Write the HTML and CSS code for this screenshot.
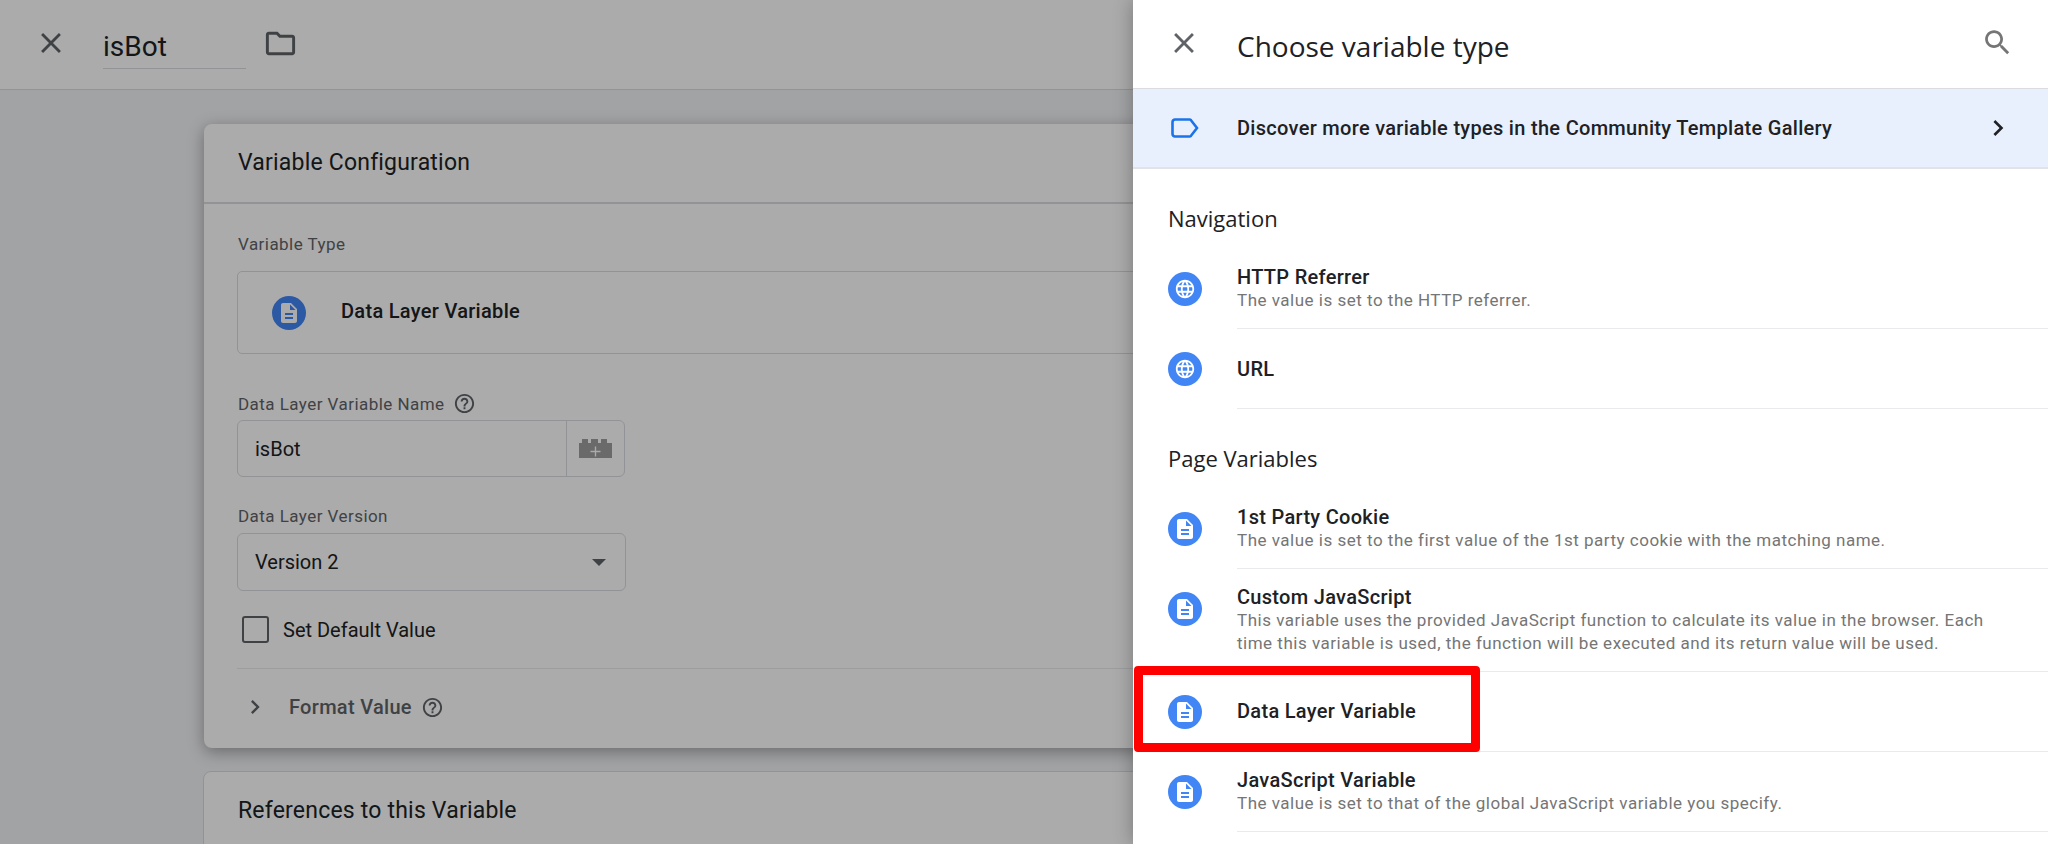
FILE: index.html
```html
<!DOCTYPE html>
<html>

<head>
    <title>Choose variable type</title>
    <link rel="stylesheet" href="styles.css">
</head>

<body>
    <div class="editor">
        <div class="editor-bar">
            <svg class="bar-close" viewBox="0 0 24 24"><path d="M19 6.41L17.59 5 12 10.59 6.41 5 5 6.41 10.59 12 5 17.59 6.41 19 12 13.41 17.59 19 19 17.59 13.41 12z"/></svg>
            <div class="name-field">isBot</div>
            <svg class="bar-folder" viewBox="0 0 24 24"><path d="M20 6h-8l-2-2H4c-1.1 0-2 .9-2 2v12c0 1.1.9 2 2 2h16c1.1 0 2-.9 2-2V8c0-1.1-.9-2-2-2zm0 12H4V6h5.17l2 2H20v10z"/></svg>
        </div>

        <div class="card card-raised">
            <h2 class="card-title">Variable Configuration</h2>
            <div class="card-body">
                <div class="field-label first-label">Variable Type</div>
                <div class="type-box">
                    <span class="type-icon">
                        <svg viewBox="0 0 24 24"><path d="M14 2H6c-1.1 0-1.99.9-1.99 2L4 20c0 1.1.89 2 1.99 2H18c1.1 0 2-.9 2-2V8l-6-6zm2 16H8v-2h8v2zm0-4H8v-2h8v2zm-3-5V3.5L18.5 9H13z"/></svg>
                    </span>
                    <span class="type-name">Data Layer Variable</span>
                </div>

                <div class="field-label name-label">
                    Data Layer Variable Name
                    <svg class="help" viewBox="0 0 24 24"><path d="M11 18h2v-2h-2v2zm1-16C6.48 2 2 6.48 2 12s4.48 10 10 10 10-4.48 10-10S17.52 2 12 2zm0 18c-4.41 0-8-3.59-8-8s3.59-8 8-8 8 3.59 8 8-3.59 8-8 8zm0-14c-2.21 0-4 1.79-4 4h2c0-1.1.9-2 2-2s2 .9 2 2c0 2-3 1.75-3 5h2c0-2.25 3-2.5 3-5 0-2.21-1.79-4-4-4z"/></svg>
                </div>
                <div class="input-group">
                    <span class="input-value">isBot</span>
                    <span class="input-addon">
                        <svg viewBox="0 0 33 19">
                            <path class="brick" d="M0 4h3V0h6v4h3V0h7v4h3V0h6v4h5v15H0z"/>
                            <path class="brick-plus" d="M15.8 7.5h1.4v4.3h4.3v1.4h-4.3v4.3h-1.4v-4.3h-4.3v-1.4h4.3z"/>
                        </svg>
                    </span>
                </div>

                <div class="field-label version-label">Data Layer Version</div>
                <div class="select-box">
                    <span>Version 2</span>
                    <span class="caret"></span>
                </div>

                <div class="checkbox-row">
                    <span class="checkbox"></span>
                    <span>Set Default Value</span>
                </div>

                <div class="format-row">
                    <svg class="format-chevron" viewBox="0 0 24 24"><path d="M10 6L8.59 7.41 13.17 12l-4.58 4.59L10 18l6-6z"/></svg>
                    <span class="format-text">Format Value</span>
                    <svg class="help" viewBox="0 0 24 24"><path d="M11 18h2v-2h-2v2zm1-16C6.48 2 2 6.48 2 12s4.48 10 10 10 10-4.48 10-10S17.52 2 12 2zm0 18c-4.41 0-8-3.59-8-8s3.59-8 8-8 8 3.59 8 8-3.59 8-8 8zm0-14c-2.21 0-4 1.79-4 4h2c0-1.1.9-2 2-2s2 .9 2 2c0 2-3 1.75-3 5h2c0-2.25 3-2.5 3-5 0-2.21-1.79-4-4-4z"/></svg>
                </div>
            </div>
        </div>

        <div class="card card-flat">
            <h2 class="card-title">References to this Variable</h2>
        </div>
    </div>

    <div class="scrim"></div>

    <div class="panel">
        <div class="panel-head">
            <svg class="panel-close" viewBox="0 0 24 24"><path d="M19 6.41L17.59 5 12 10.59 6.41 5 5 6.41 10.59 12 5 17.59 6.41 19 12 13.41 17.59 19 19 17.59 13.41 12z"/></svg>
            <h1 class="panel-title">Choose variable type</h1>
            <svg class="panel-search" viewBox="0 0 24 24"><path d="M15.5 14h-.79l-.28-.27C15.41 12.59 16 11.11 16 9.5 16 5.91 13.09 3 9.5 3S3 5.91 3 9.5 5.91 16 9.5 16c1.61 0 3.09-.59 4.23-1.57l.27.28v.79l5 4.99L20.49 19l-4.99-5zm-6 0C7.01 14 5 11.99 5 9.5S7.01 5 9.5 5 14 7.01 14 9.5 11.99 14 9.5 14z"/></svg>
        </div>

        <div class="banner">
            <span class="banner-icon">
                <svg viewBox="0 0 28 20"><path d="M4 1.5h14.5a2 2 0 0 1 1.5.7L26 10l-6 7.8a2 2 0 0 1-1.5.7H4A2.5 2.5 0 0 1 1.5 16V4A2.5 2.5 0 0 1 4 1.5z"/></svg>
            </span>
            <span class="banner-text">Discover more variable types in the Community Template Gallery</span>
            <svg class="banner-chevron" viewBox="0 0 24 24"><path d="M10 6L8.59 7.41 13.17 12l-4.58 4.59L10 18l6-6z"/></svg>
        </div>

        <h3 class="group-title">Navigation</h3>
        <div class="type-row">
            <span class="row-icon">
                <svg class="globe" viewBox="0 0 24 24"><path d="M11.99 2C6.47 2 2 6.48 2 12s4.47 10 9.99 10C17.52 22 22 17.52 22 12S17.52 2 11.99 2zm6.93 6h-2.95c-.32-1.25-.78-2.45-1.38-3.56 1.84.63 3.37 1.91 4.33 3.56zM12 4.04c.83 1.2 1.48 2.53 1.91 3.96h-3.82c.43-1.43 1.08-2.76 1.91-3.96zM4.26 14C4.1 13.36 4 12.69 4 12s.1-1.36.26-2h3.38c-.08.66-.14 1.32-.14 2 0 .68.06 1.34.14 2H4.26zm.82 2h2.95c.32 1.25.78 2.45 1.38 3.56-1.84-.63-3.37-1.9-4.33-3.56zm2.95-8H5.08c.96-1.66 2.49-2.93 4.33-3.56C8.81 5.55 8.35 6.75 8.03 8zM12 19.96c-.83-1.2-1.48-2.53-1.91-3.96h3.82c-.43 1.43-1.08 2.76-1.91 3.96zM14.34 14H9.66c-.09-.66-.16-1.32-.16-2 0-.68.07-1.35.16-2h4.68c.09.65.16 1.32.16 2 0 .68-.07 1.34-.16 2zm.25 5.56c.6-1.11 1.06-2.31 1.38-3.56h2.95c-.97 1.65-2.5 2.93-4.33 3.56zM16.36 14c.08-.66.14-1.32.14-2 0-.68-.06-1.34-.14-2h3.38c.16.64.26 1.31.26 2s-.1 1.36-.26 2h-3.38z"/></svg>
            </span>
            <div class="row-body">
                <div class="row-name">HTTP Referrer</div>
                <div class="row-desc">The value is set to the HTTP referrer.</div>
            </div>
        </div>
        <div class="type-row">
            <span class="row-icon">
                <svg class="globe" viewBox="0 0 24 24"><path d="M11.99 2C6.47 2 2 6.48 2 12s4.47 10 9.99 10C17.52 22 22 17.52 22 12S17.52 2 11.99 2zm6.93 6h-2.95c-.32-1.25-.78-2.45-1.38-3.56 1.84.63 3.37 1.91 4.33 3.56zM12 4.04c.83 1.2 1.48 2.53 1.91 3.96h-3.82c.43-1.43 1.08-2.76 1.91-3.96zM4.26 14C4.1 13.36 4 12.69 4 12s.1-1.36.26-2h3.38c-.08.66-.14 1.32-.14 2 0 .68.06 1.34.14 2H4.26zm.82 2h2.95c.32 1.25.78 2.45 1.38 3.56-1.84-.63-3.37-1.9-4.33-3.56zm2.95-8H5.08c.96-1.66 2.49-2.93 4.33-3.56C8.81 5.55 8.35 6.75 8.03 8zM12 19.96c-.83-1.2-1.48-2.53-1.91-3.96h3.82c-.43 1.43-1.08 2.76-1.91 3.96zM14.34 14H9.66c-.09-.66-.16-1.32-.16-2 0-.68.07-1.35.16-2h4.68c.09.65.16 1.32.16 2 0 .68-.07 1.34-.16 2zm.25 5.56c.6-1.11 1.06-2.31 1.38-3.56h2.95c-.97 1.65-2.5 2.93-4.33 3.56zM16.36 14c.08-.66.14-1.32.14-2 0-.68-.06-1.34-.14-2h3.38c.16.64.26 1.31.26 2s-.1 1.36-.26 2h-3.38z"/></svg>
            </span>
            <div class="row-body">
                <div class="row-name">URL</div>
            </div>
        </div>

        <h3 class="group-title">Page Variables</h3>
        <div class="type-row">
            <span class="row-icon">
                <svg viewBox="0 0 24 24"><path d="M14 2H6c-1.1 0-1.99.9-1.99 2L4 20c0 1.1.89 2 1.99 2H18c1.1 0 2-.9 2-2V8l-6-6zm2 16H8v-2h8v2zm0-4H8v-2h8v2zm-3-5V3.5L18.5 9H13z"/></svg>
            </span>
            <div class="row-body">
                <div class="row-name">1st Party Cookie</div>
                <div class="row-desc">The value is set to the first value of the 1st party cookie with the matching name.</div>
            </div>
        </div>
        <div class="type-row">
            <span class="row-icon">
                <svg viewBox="0 0 24 24"><path d="M14 2H6c-1.1 0-1.99.9-1.99 2L4 20c0 1.1.89 2 1.99 2H18c1.1 0 2-.9 2-2V8l-6-6zm2 16H8v-2h8v2zm0-4H8v-2h8v2zm-3-5V3.5L18.5 9H13z"/></svg>
            </span>
            <div class="row-body">
                <div class="row-name">Custom JavaScript</div>
                <div class="row-desc">This variable uses the provided JavaScript function to calculate its value in the browser. Each time this variable is used, the function will be executed and its return value will be used.</div>
            </div>
        </div>
        <div class="type-row">
            <span class="row-icon">
                <svg viewBox="0 0 24 24"><path d="M14 2H6c-1.1 0-1.99.9-1.99 2L4 20c0 1.1.89 2 1.99 2H18c1.1 0 2-.9 2-2V8l-6-6zm2 16H8v-2h8v2zm0-4H8v-2h8v2zm-3-5V3.5L18.5 9H13z"/></svg>
            </span>
            <div class="row-body">
                <div class="row-name">Data Layer Variable</div>
            </div>
        </div>
        <div class="type-row">
            <span class="row-icon">
                <svg viewBox="0 0 24 24"><path d="M14 2H6c-1.1 0-1.99.9-1.99 2L4 20c0 1.1.89 2 1.99 2H18c1.1 0 2-.9 2-2V8l-6-6zm2 16H8v-2h8v2zm0-4H8v-2h8v2zm-3-5V3.5L18.5 9H13z"/></svg>
            </span>
            <div class="row-body">
                <div class="row-name">JavaScript Variable</div>
                <div class="row-desc">The value is set to that of the global JavaScript variable you specify.</div>
            </div>
        </div>

        <div class="highlight"></div>
    </div>
</body>

</html>
```

FILE: styles.css
```css
* {
    box-sizing: border-box;
}

html,
body {
    margin: 0;
    height: 844px;
    overflow: hidden;
}

body {
    position: relative;
    font-family: Roboto, Arial, sans-serif;
    color: #202124;
    background-color: #f2f3f6;
}

h1,
h2,
h3 {
    margin: 0;
    font-weight: 400;
}

/* editor behind the panel */

.editor-bar {
    display: flex;
    align-items: flex-start;
    height: 90px;
    background-color: #fff;
    border-bottom: 1px solid #dadce0;
}

.bar-close {
    width: 34px;
    height: 34px;
    margin: 26px 0 0 34px;
    fill: #5f6368;
}

.name-field {
    width: 143px;
    height: 69px;
    margin-left: 35px;
    padding-top: 29px;
    font-size: 28px;
    line-height: 36px;
    border-bottom: 1px solid #dadce0;
}

.bar-folder {
    width: 35px;
    height: 35px;
    margin: 26px 0 0 17px;
    fill: #5f6368;
}

.card {
    width: 1640px;
    margin-left: 204px;
    background-color: #fff;
    border-radius: 8px 8px 0 0;
}

.card-raised {
    height: 624px;
    margin-top: 34px;
    border-radius: 8px;
    box-shadow: 0 4px 16px rgba(0, 0, 0, 0.35);
}

.card-flat {
    height: 120px;
    margin-top: 23px;
    margin-left: 203px;
    border: 1px solid #dadce0;
}

.card-title {
    height: 80px;
    padding: 25px 34px 0;
    font-size: 23px;
    line-height: 28px;
    letter-spacing: 0.2px;
    border-bottom: 2px solid #dadce0;
}

.card-flat .card-title {
    border-bottom: none;
}

.card-body {
    padding: 0 33px;
}

.field-label {
    display: flex;
    align-items: center;
    padding-left: 1px;
    font-size: 17px;
    line-height: 22px;
    letter-spacing: 0.45px;
    color: #5f6368;
}

.first-label {
    padding-top: 29px;
    height: 51px;
}

.help {
    width: 23px;
    height: 23px;
    margin-left: 9px;
    fill: #5f6368;
}

.type-box {
    display: flex;
    align-items: center;
    height: 83px;
    margin-top: 16px;
    border: 1.5px solid #dadce0;
    border-radius: 5px;
}

.type-icon {
    display: flex;
    align-items: center;
    justify-content: center;
    width: 34px;
    height: 34px;
    margin-left: 34px;
    border-radius: 50%;
    background-color: #4285f4;
}

.type-icon svg {
    width: 24px;
    height: 24px;
    fill: #fff;
}

.type-name {
    margin: -4px 0 0 35px;
    font-size: 20px;
    font-weight: 500;
    letter-spacing: 0.3px;
}

.name-label {
    margin-top: 38px;
}

.input-group {
    display: flex;
    align-items: center;
    justify-content: space-between;
    width: 388px;
    height: 57px;
    margin-top: 5px;
    padding-left: 17px;
    font-size: 20px;
    border: 1.5px solid #dadce0;
    border-radius: 6px;
}

.input-addon {
    display: flex;
    align-items: center;
    justify-content: center;
    width: 58px;
    height: 100%;
    border-left: 1.5px solid #dadce0;
}

.input-addon svg {
    width: 33px;
    height: 19px;
}

.brick {
    fill: #9e9e9e;
}

.brick-plus {
    fill: #fff;
}

.version-label {
    margin-top: 28px;
}

.select-box {
    display: flex;
    align-items: center;
    justify-content: space-between;
    width: 389px;
    height: 58px;
    margin-top: 6px;
    padding: 0 19px 0 17px;
    font-size: 20px;
    border: 1.5px solid #dadce0;
    border-radius: 6px;
}

.caret {
    width: 0;
    height: 0;
    border-left: 7px solid transparent;
    border-right: 7px solid transparent;
    border-top: 7px solid #5f6368;
}

.checkbox-row {
    display: flex;
    align-items: center;
    height: 78px;
    font-size: 20px;
    border-bottom: 1.5px solid #e8eaed;
}

.checkbox {
    width: 27px;
    height: 27px;
    margin: 0 14px 0 5px;
    border: 2.5px solid #5f6368;
    border-radius: 3px;
}

.format-row {
    display: flex;
    align-items: center;
    height: 76px;
}

.format-chevron {
    width: 28px;
    height: 28px;
    margin-left: 4px;
    fill: #5f6368;
}

.format-text {
    margin-left: 20px;
    font-size: 20px;
    font-weight: 500;
    letter-spacing: 0.3px;
    color: #5f6368;
}

/* dim layer between editor and panel */

.scrim {
    position: absolute;
    top: 0;
    left: 0;
    width: 100%;
    height: 100%;
    background-color: rgba(0, 0, 0, 0.33);
}

/* side panel */

.panel {
    position: absolute;
    top: 0;
    right: 0;
    bottom: 0;
    width: 915px;
    overflow: hidden;
    background-color: #fff;
    box-shadow: 0 0 18px rgba(0, 0, 0, 0.3);
}

.panel-head {
    display: flex;
    align-items: center;
    height: 89px;
    border-bottom: 1px solid #dadce0;
}

.panel-close {
    width: 34px;
    height: 34px;
    margin: -2px 0 0 34px;
    fill: #5f6368;
}

.panel-title {
    flex: 1;
    margin: 3px 0 0 36px;
    font-family: "Open Sans", Roboto, sans-serif;
    font-size: 28px;
}

.panel-search {
    width: 33px;
    height: 33px;
    margin: -4px 34px 0 0;
    fill: #757575;
}

.banner {
    display: flex;
    align-items: center;
    height: 80px;
    background-color: #e8f0fe;
    border-bottom: 2px solid #e0e3e8;
}

.banner-icon {
    display: flex;
    width: 28px;
    margin-left: 38px;
}

.banner-icon svg {
    width: 28px;
    height: 20px;
    fill: none;
    stroke: #1a73e8;
    stroke-width: 2.6;
}

.banner-text {
    flex: 1;
    margin-left: 38px;
    font-size: 20px;
    font-weight: 500;
    letter-spacing: 0.3px;
}

.banner-chevron {
    width: 32px;
    height: 32px;
    margin-right: 34px;
    fill: #202124;
}

.group-title {
    height: 80px;
    padding: 35px 0 0 35px;
    font-family: "Open Sans", Roboto, sans-serif;
    font-size: 22px;
    line-height: 28px;
}

.type-row {
    display: flex;
}

.row-icon {
    display: flex;
    align-items: center;
    justify-content: center;
    flex-shrink: 0;
    width: 34px;
    height: 34px;
    margin: 23px 35px 0 35px;
    border-radius: 50%;
    background-color: #4285f4;
}

.row-icon svg {
    width: 24px;
    height: 24px;
    fill: #fff;
}

.row-icon svg.globe {
    width: 22px;
    height: 22px;
}

.row-body {
    display: flex;
    flex: 1;
    flex-direction: column;
    justify-content: center;
    min-height: 80px;
    padding: 16px 40px 15.5px 0;
    border-bottom: 1.5px solid #e8eaed;
}

.row-name {
    font-size: 20px;
    line-height: 24px;
    font-weight: 500;
    letter-spacing: 0.3px;
}

.row-desc {
    font-size: 17px;
    line-height: 23px;
    letter-spacing: 0.5px;
    color: #757575;
}

.highlight {
    position: absolute;
    top: 666px;
    left: 1px;
    width: 346px;
    height: 86px;
    border: 9px solid #f00;
    border-radius: 4px;
}
```
